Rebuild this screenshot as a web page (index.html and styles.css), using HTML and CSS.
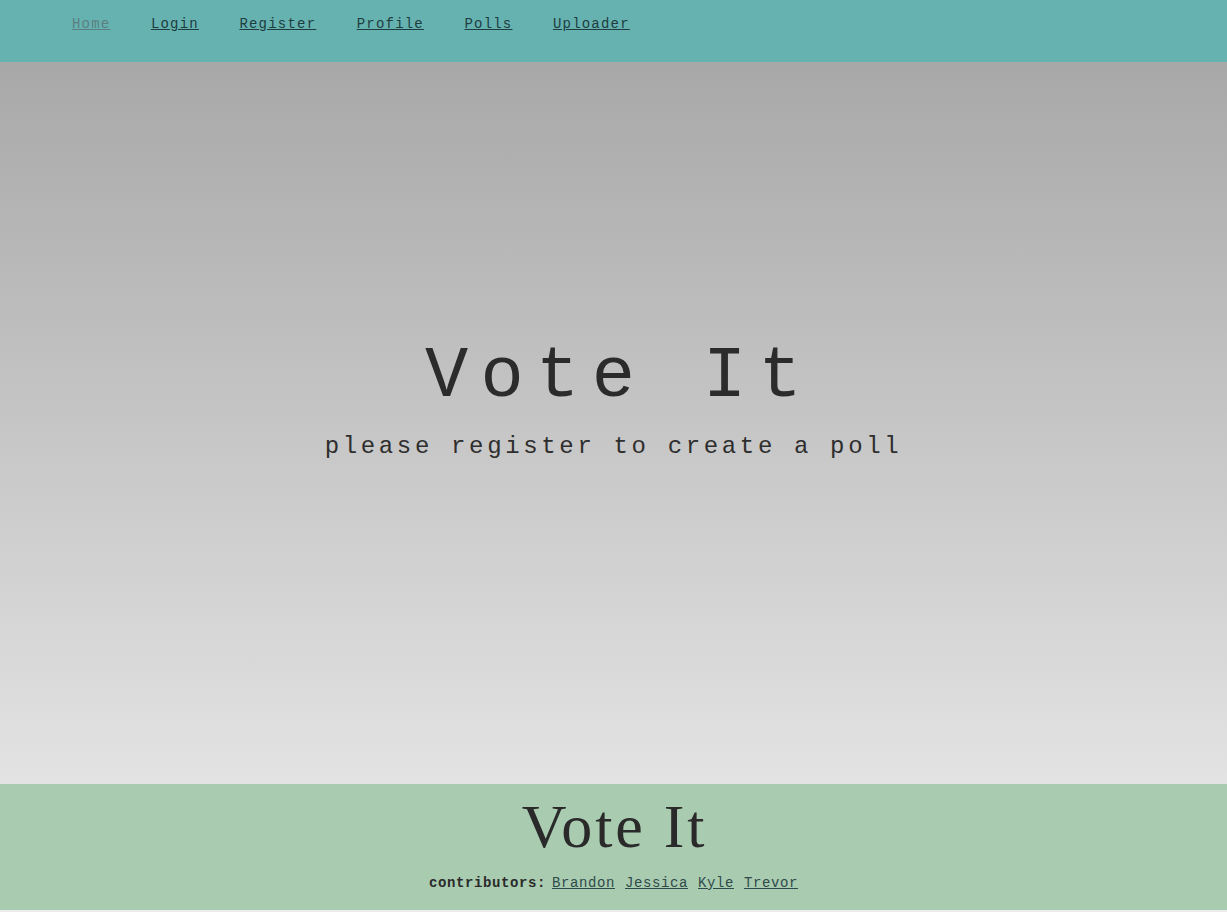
FILE: index.html
```html
<!DOCTYPE html>
<html lang="en">
<head>
<meta charset="utf-8">
<title>Vote It</title>
<link rel="stylesheet" href="styles.css">
</head>
<body>
<nav class="topnav">
  <a class="navlink current" href="#">Home</a>
  <a class="navlink" href="#">Login</a>
  <a class="navlink" href="#">Register</a>
  <a class="navlink" href="#">Profile</a>
  <a class="navlink" href="#">Polls</a>
  <a class="navlink" href="#">Uploader</a>
</nav>
<main class="hero">
  <h1 class="hero-title">Vote It</h1>
  <p class="hero-sub">please register to create a poll</p>
</main>
<footer class="site-footer">
  <div class="footer-title">Vote It</div>
  <div class="contributors">
    <span class="contrib-label">contributors:</span>
    <a class="contrib-link" href="#">Brandon</a>
    <a class="contrib-link" href="#">Jessica</a>
    <a class="contrib-link" href="#">Kyle</a>
    <a class="contrib-link" href="#">Trevor</a>
  </div>
</footer>
</body>
</html>
```

FILE: styles.css
```css
html, body {
  margin: 0;
  padding: 0;
}
body {
  background: #ececec;
  font-family: "Liberation Mono", "Courier New", monospace;
  color: #2b2b2b;
  width: 1227px;
  height: 912px;
  overflow: hidden;
}
.topnav {
  height: 62px;
  box-sizing: border-box;
  background: #66b2b0;
  display: flex;
  align-items: flex-start;
  gap: 40.5px;
  padding: 16px 0 0 72px;
}
.navlink {
  font-size: 14px;
  line-height: 16px;
  letter-spacing: 1.2px;
  color: #1d3d3f;
  text-decoration: underline;
}
.navlink.current {
  color: #5a7f80;
}
.hero {
  height: 722px;
  box-sizing: border-box;
  background: linear-gradient(to bottom, #a8a8a8 0%, #e3e3e3 100%);
  display: flex;
  flex-direction: column;
  align-items: center;
  justify-content: center;
  padding-bottom: 52px;
}
.hero-title {
  margin: 0;
  font-weight: normal;
  font-size: 72px;
  line-height: 86px;
  letter-spacing: 12.4px;
  color: #2b2b2b;
  padding-left: 12px;
}
.hero-sub {
  margin: 13px 0 0 0;
  font-size: 24px;
  line-height: 28px;
  letter-spacing: 3.65px;
  color: #2e2e2e;
}
.site-footer {
  height: 126px;
  box-sizing: border-box;
  background: #a9cbb0;
  padding-top: 5px;
  display: flex;
  flex-direction: column;
  align-items: center;
}
.footer-title {
  font-family: "Liberation Serif", "Times New Roman", serif;
  font-size: 62px;
  line-height: 74px;
  letter-spacing: 2.8px;
  color: #2a2a2a;
  padding-left: 2px;
}
.contributors {
  margin-top: 12px;
  font-size: 14px;
  line-height: 16px;
  letter-spacing: 0.6px;
  display: flex;
  gap: 10px;
}
.contrib-label {
  font-weight: bold;
  color: #2a2a2a;
  margin-right: -4px;
}
.contrib-link {
  color: #2f4a4a;
  text-decoration: underline;
}
```
